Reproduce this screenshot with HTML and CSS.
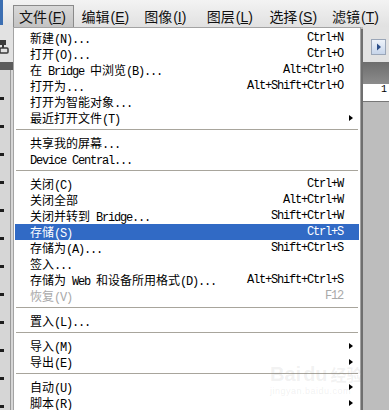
FILE: index.html
```html
<!DOCTYPE html>
<html lang="zh-CN">
<head>
<meta charset="utf-8">
<title>文件菜单</title>
<link rel="stylesheet" href="styles.css">
</head>
<body>
<div class="app">
  <div class="menubar">
    <div class="corner"></div>
    <div class="mb-item active">文件<span class="mn">(<u>F</u>)</span></div>
    <div class="mb-item">编辑<span class="mn">(<u>E</u>)</span></div>
    <div class="mb-item">图像<span class="mn">(<u>I</u>)</span></div>
    <div class="mb-item">图层<span class="mn">(<u>L</u>)</span></div>
    <div class="mb-item">选择<span class="mn">(<u>S</u>)</span></div>
    <div class="mb-item">滤镜<span class="mn">(<u>T</u>)</span></div>
  </div>
  <div class="workspace">
    <div class="toolbox">
      <div class="tb-top">
        <svg class="tool-icon" width="9" height="14" viewBox="0 0 9 14"><rect x="0" y="0" width="6" height="5" fill="#3a3a3a"/><rect x="2" y="5" width="2" height="3" fill="#3a3a3a"/><rect x="0" y="8" width="8" height="5" rx="1" fill="none" stroke="#3a3a3a" stroke-width="1.5"/></svg>
      </div>
      <div class="tb-band"></div>
      <div class="tb-body">
        <div class="ticks">
          <i></i><i></i><i></i><i></i><i></i><i></i><i></i><i></i><i></i><i></i><i></i><i></i>
        </div>
        <div class="tb-line"></div>
      </div>
    </div>
    <div class="center"></div>
    <div class="right">
      <div class="rt-top">
        <div class="opt-btn"><svg width="6" height="8" viewBox="0 0 6 8"><path d="M1 0.5 L5 4 L1 7.5 Z" fill="#2c4f8a"/></svg></div>
      </div>
      <div class="rt-band"></div>
      <div class="ruler"><span class="ruler-num">1</span></div>
    </div>
  </div>

  <div class="dropdown">
    <div class="it"><span class="lb">新建<span class="m">(N)...</span></span><span class="m">Ctrl+N</span><span class="tail"></span></div>
    <div class="it"><span class="lb">打开<span class="m">(O)...</span></span><span class="m">Ctrl+O</span><span class="tail"></span></div>
    <div class="it"><span class="lb">在<span class="m"> Bridge </span>中浏览<span class="m">(B)...</span></span><span class="m">Alt+Ctrl+O</span><span class="tail"></span></div>
    <div class="it"><span class="lb">打开为<span class="m">...</span></span><span class="m">Alt+Shift+Ctrl+O</span><span class="tail"></span></div>
    <div class="it"><span class="lb">打开为智能对象<span class="m">...</span></span><span class="tail"></span></div>
    <div class="it"><span class="lb">最近打开文件<span class="m">(T)</span></span><span class="tail"><span class="arrow"></span></span></div>
    <div class="sep"></div>
    <div class="it"><span class="lb">共享我的屏幕<span class="m">...</span></span><span class="tail"></span></div>
    <div class="it"><span class="lb"><span class="m">Device Central...</span></span><span class="tail"></span></div>
    <div class="sep"></div>
    <div class="it"><span class="lb">关闭<span class="m">(C)</span></span><span class="m">Ctrl+W</span><span class="tail"></span></div>
    <div class="it"><span class="lb">关闭全部</span><span class="m">Alt+Ctrl+W</span><span class="tail"></span></div>
    <div class="it"><span class="lb">关闭并转到<span class="m"> Bridge...</span></span><span class="m">Shift+Ctrl+W</span><span class="tail"></span></div>
    <div class="it hl"><span class="lb">存储<span class="m">(S)</span></span><span class="m">Ctrl+S</span><span class="tail"></span></div>
    <div class="it"><span class="lb">存储为<span class="m">(A)...</span></span><span class="m">Shift+Ctrl+S</span><span class="tail"></span></div>
    <div class="it"><span class="lb">签入<span class="m">...</span></span><span class="tail"></span></div>
    <div class="it"><span class="lb">存储为<span class="m"> Web </span>和设备所用格式<span class="m">(D)...</span></span><span class="m">Alt+Shift+Ctrl+S</span><span class="tail"></span></div>
    <div class="it dis"><span class="lb">恢复<span class="m">(V)</span></span><span class="m">F12</span><span class="tail"></span></div>
    <div class="sep"></div>
    <div class="it"><span class="lb">置入<span class="m">(L)...</span></span><span class="tail"></span></div>
    <div class="sep"></div>
    <div class="it"><span class="lb">导入<span class="m">(M)</span></span><span class="tail"><span class="arrow"></span></span></div>
    <div class="it"><span class="lb">导出<span class="m">(E)</span></span><span class="tail"><span class="arrow"></span></span></div>
    <div class="sep"></div>
    <div class="it"><span class="lb">自动<span class="m">(U)</span></span><span class="tail"><span class="arrow"></span></span></div>
    <div class="it"><span class="lb">脚本<span class="m">(R)</span></span><span class="tail"><span class="arrow"></span></span></div>
  </div>

  <div class="watermark">
    <div class="wm-logo">Bai<span class="wm-du">du</span><span class="wm-cn">经验</span></div>
    <div class="wm-url">jingyan.baidu.com</div>
  </div>
</div>
</body>
</html>
```

FILE: styles.css
```css
* {
  box-sizing: border-box;
  margin: 0;
  padding: 0;
}

html,
body {
  width: 389px;
  height: 410px;
  overflow: hidden;
}

body {
  background: #bdbdbd;
  font-family: "Noto Sans CJK SC", sans-serif;
  color: #000;
}

.app {
  position: relative;
  width: 389px;
  height: 410px;
  display: flex;
  flex-direction: column;
}

/* ---------- menu bar ---------- */
.menubar {
  height: 27px;
  flex: none;
  display: flex;
  align-items: flex-start;
  padding-top: 5px;
  background: linear-gradient(#f3f3f3, #e1e1e1);
}

.corner {
  width: 3px;
  height: 25px;
  margin-top: -5px;
  margin-right: 10px;
  background: #3c6fb2;
}

.mb-item {
  width: 61px;
  height: 22px;
  margin-right: 1.6px;
  padding-left: 5px;
  border: 1px solid transparent;
  font-size: 14px;
  line-height: 20px;
  white-space: nowrap;
  color: #111;
}

.mb-item.active {
  background: linear-gradient(#d9d9d9, #c3c3c3);
  border-color: #8a8a8a;
  border-bottom: none;
}

.mn {
  font-family: "Liberation Sans", sans-serif;
  font-size: 14px;
  margin-left: 1px;
}

/* ---------- workspace behind the menu ---------- */
.workspace {
  flex: 1;
  display: flex;
}

.toolbox {
  width: 13px;
  display: flex;
  flex-direction: column;
}

.tb-top {
  height: 35px;
  background: #e2e2e2;
  padding-top: 13px;
}

.tool-icon {
  display: block;
}

.tb-band {
  height: 8px;
  background: #5c5c5c;
}

.tb-body {
  flex: 1;
  display: flex;
  background: #d6d6d6;
}

.ticks {
  width: 10px;
  display: flex;
  flex-direction: column;
  gap: 25px;
  padding-top: 27px;
}

.ticks i {
  display: block;
  width: 4px;
  height: 3px;
  background: #1e1e1e;
}

.tb-line {
  width: 1px;
  background: #9a9a9a;
}

.center {
  flex: 1;
  background: #bdbdbd;
}

.right {
  width: 26px;
  display: flex;
  flex-direction: column;
}

.rt-top {
  height: 35px;
  background: #e2e2e2;
  padding: 12px 0 0 8px;
}

.opt-btn {
  width: 15px;
  height: 16px;
  border: 1px solid #9aa6b8;
  background: linear-gradient(#eef3fa, #c7d5ea);
  display: flex;
  align-items: center;
  justify-content: center;
}

.rt-band {
  height: 22px;
  background: linear-gradient(#6d6d6d, #8c8c8c);
}

.ruler {
  height: 18px;
  background: #fff;
  border-bottom: 1px solid #777;
  display: flex;
  justify-content: flex-end;
  align-items: flex-start;
  padding-right: 2px;
  font-family: "Liberation Mono", monospace;
  font-size: 10px;
  line-height: 12px;
}

/* ---------- dropdown menu ---------- */
.dropdown {
  position: absolute;
  left: 13px;
  top: 27px;
  width: 348px;
  height: 400px;
  background: #fff;
  border: 1px solid #a3a3a3;
  box-shadow: 2px 2px 0 #6f6f6f;
  padding: 2px 1px;
}

.it {
  display: flex;
  height: 16px;
  line-height: 16px;
  padding-left: 15px;
  padding-right: 5px;
  font-size: 12px;
  white-space: nowrap;
}

.lb {
  flex: 1;
}

.m {
  font-family: "Liberation Mono", monospace;
  font-size: 12px;
  letter-spacing: -1.2px;
}

.tail {
  width: 11px;
  flex: none;
  display: flex;
  align-items: center;
  justify-content: flex-end;
  padding-right: 1px;
}

.arrow {
  width: 0;
  height: 0;
  border-left: 4px solid #000;
  border-top: 3.5px solid transparent;
  border-bottom: 3.5px solid transparent;
}

.it.hl {
  background: #316ac5;
  color: #fff;
}

.it.dis {
  color: #a9a9a9;
}

.sep {
  height: 9px;
  padding: 3px 1px 0;
}

.sep::before {
  content: "";
  display: block;
  height: 1px;
  background: #a8a59c;
}

/* ---------- watermark ---------- */
.watermark {
  position: absolute;
  left: 270px;
  top: 362px;
  color: rgba(120, 120, 120, 0.11);
  font-family: "Liberation Sans", sans-serif;
  pointer-events: none;
}

.wm-logo {
  font-size: 20px;
  font-weight: bold;
  line-height: 24px;
  white-space: nowrap;
}

.wm-du {
  margin-left: 2px;
}

.wm-cn {
  font-family: "Noto Sans CJK SC", sans-serif;
  font-size: 16px;
  margin-left: 3px;
}

.wm-url {
  font-size: 9px;
  line-height: 10px;
  letter-spacing: 0.5px;
}
```
